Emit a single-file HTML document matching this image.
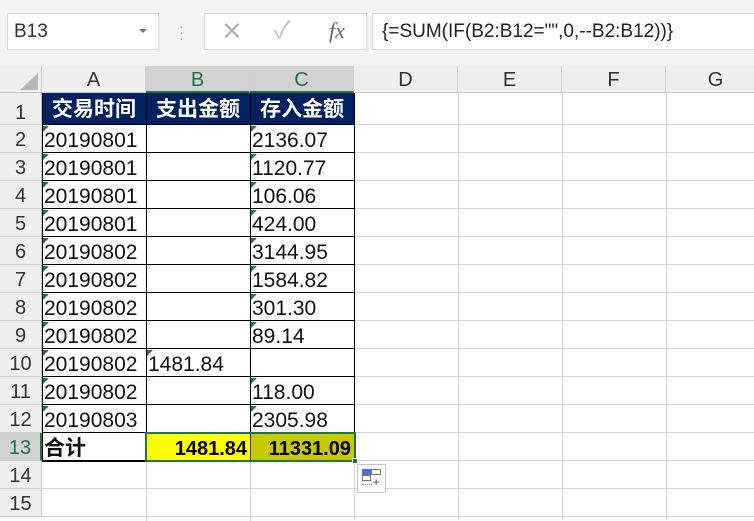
<!DOCTYPE html>
<html><head><meta charset="utf-8"><style>
*{margin:0;padding:0;box-sizing:border-box}
body{width:754px;height:520px;overflow:hidden;background:#fff;position:relative;font-family:"Liberation Sans","Noto Sans CJK SC",sans-serif}
.a{position:absolute}
.top{left:0;top:0;width:754px;height:66px;background:#f3f3f3}
.box{background:#fff;border:1px solid #dadada}
.ch{top:66px;height:27px;background:#efefef;border-right:1px solid #d0d0d0;border-bottom:1px solid #c8c8c8;text-align:center;font-size:20px;line-height:29px;color:#333}
.rh{left:0;width:42px;height:28px;background:#efefef;border-bottom:1px solid #d0d0d0;border-right:1px solid #c8c8c8;text-align:center;font-size:20px;line-height:31px;color:#333}
.vl{top:93px;width:1px;height:427px;background:#d4d4d4}
.hl{left:42px;width:712px;height:1px;background:#d4d4d4}
.c{height:28px;font-size:21px;line-height:32px;padding-left:2px;color:#111;white-space:nowrap}
.t{width:0;height:0;border-top:6px solid #1e7b34;border-right:6px solid transparent}
</style></head><body>
<div class="a top"></div>
<div class="a box" style="left:7px;top:13px;width:152px;height:37px"></div>
<div class="a" style="left:14px;top:13px;line-height:37px;font-size:19px;color:#333">B13</div>
<div class="a" style="left:139px;top:29px;width:0;height:0;border-left:4px solid transparent;border-right:4px solid transparent;border-top:4px solid #777"></div>
<div class="a" style="left:179px;top:23px;color:#aaa;font-size:14px;line-height:6px">·<br>·<br>·</div>
<div class="a box" style="left:204px;top:13px;width:163px;height:37px"></div>
<div class="a" style="left:221px;top:17px;font-size:26px;color:#b8b8b8;line-height:28px">✕</div>
<div class="a" style="left:274px;top:17px;font-size:24px;color:#c0c0c0;line-height:28px">✓</div>
<div class="a" style="left:329px;top:17px;font-size:22px;color:#666;font-style:italic;font-family:'Liberation Serif',serif;line-height:28px">fx</div>
<div class="a box" style="left:372px;top:13px;width:390px;height:37px"></div>
<div class="a" style="left:382px;top:13px;line-height:38px;font-size:19px;color:#222">{=SUM(IF(B2:B12="",0,--B2:B12))}</div>

<div class="a" style="left:0;top:66px;width:42px;height:27px;background:#efefef;border-right:1px solid #c8c8c8;border-bottom:1px solid #c8c8c8"></div>
<div class="a" style="left:20px;top:73px;width:0;height:0;border-left:18px solid transparent;border-bottom:17px solid #b7b7b7"></div>
<div class="a ch" style="left:42px;width:104px">A</div>
<div class="a ch" style="left:146px;width:104px;background:#d2d2d2;color:#217346;border-bottom:2px solid #217346">B</div>
<div class="a ch" style="left:250px;width:104px;background:#d2d2d2;color:#217346;border-bottom:2px solid #217346">C</div>
<div class="a ch" style="left:354px;width:104px">D</div>
<div class="a ch" style="left:458px;width:104px">E</div>
<div class="a ch" style="left:562px;width:104px">F</div>
<div class="a ch" style="left:666px;width:100px">G</div>

<div class="a rh" style="top:93px;height:32px;line-height:40px">1</div>
<div class="a rh" style="top:125px">2</div><div class="a rh" style="top:153px">3</div><div class="a rh" style="top:181px">4</div><div class="a rh" style="top:209px">5</div><div class="a rh" style="top:237px">6</div><div class="a rh" style="top:265px">7</div><div class="a rh" style="top:293px">8</div><div class="a rh" style="top:321px">9</div><div class="a rh" style="top:349px">10</div><div class="a rh" style="top:377px">11</div><div class="a rh" style="top:405px">12</div>
<div class="a rh" style="top:433px;background:#d2d2d2;color:#217346;border-right:2px solid #217346">13</div>
<div class="a rh" style="top:461px">14</div><div class="a rh" style="top:489px">15</div>

<div class="a vl" style="left:458px"></div><div class="a vl" style="left:562px"></div><div class="a vl" style="left:666px"></div>
<div class="a vl" style="left:146px;top:461px;height:60px"></div><div class="a vl" style="left:250px;top:461px;height:60px"></div><div class="a vl" style="left:354px;top:93px"></div>
<div class="a hl" style="top:124px"></div><div class="a hl" style="top:152px"></div><div class="a hl" style="top:180px"></div><div class="a hl" style="top:208px"></div><div class="a hl" style="top:236px"></div><div class="a hl" style="top:264px"></div><div class="a hl" style="top:292px"></div><div class="a hl" style="top:320px"></div><div class="a hl" style="top:348px"></div><div class="a hl" style="top:376px"></div><div class="a hl" style="top:404px"></div><div class="a hl" style="top:432px"></div><div class="a hl" style="top:460px"></div><div class="a hl" style="top:488px"></div><div class="a hl" style="top:516px"></div>

<div class="a" style="left:42px;top:93px;width:313px;height:32px;background:#002060"></div>
<div class="a" style="left:42px;top:93px;width:313px;height:369px;border:1px solid #000;border-top:none"></div>
<div class="a" style="left:146px;top:93px;width:1px;height:369px;background:#000"></div>
<div class="a" style="left:250px;top:93px;width:1px;height:369px;background:#000"></div>
<div class="a" style="left:42px;top:124px;width:313px;height:337px;background:repeating-linear-gradient(to bottom,#000 0,#000 1px,transparent 1px,transparent 28px)"></div>
<div class="a" style="left:42px;top:93px;width:104px;text-align:center;color:#fff;font-weight:bold;font-size:21px;line-height:34px">交易时间</div>
<div class="a" style="left:146px;top:93px;width:104px;text-align:center;color:#fff;font-weight:bold;font-size:21px;line-height:34px">支出金额</div>
<div class="a" style="left:250px;top:93px;width:104px;text-align:center;color:#fff;font-weight:bold;font-size:21px;line-height:34px">存入金额</div>

<div class="a c" style="left:42px;top:125px">20190801</div><div class="a c" style="left:250px;top:125px">2136.07</div>
<div class="a c" style="left:42px;top:153px">20190801</div><div class="a c" style="left:250px;top:153px">1120.77</div>
<div class="a c" style="left:42px;top:181px">20190801</div><div class="a c" style="left:250px;top:181px">106.06</div>
<div class="a c" style="left:42px;top:209px">20190801</div><div class="a c" style="left:250px;top:209px">424.00</div>
<div class="a c" style="left:42px;top:237px">20190802</div><div class="a c" style="left:250px;top:237px">3144.95</div>
<div class="a c" style="left:42px;top:265px">20190802</div><div class="a c" style="left:250px;top:265px">1584.82</div>
<div class="a c" style="left:42px;top:293px">20190802</div><div class="a c" style="left:250px;top:293px">301.30</div>
<div class="a c" style="left:42px;top:321px">20190802</div><div class="a c" style="left:250px;top:321px">89.14</div>
<div class="a c" style="left:42px;top:349px">20190802</div><div class="a c" style="left:146px;top:349px">1481.84</div>
<div class="a c" style="left:42px;top:377px">20190802</div><div class="a c" style="left:250px;top:377px">118.00</div>
<div class="a c" style="left:42px;top:405px">20190803</div><div class="a c" style="left:250px;top:405px">2305.98</div>

<div class="a t" style="left:43px;top:126px"></div><div class="a t" style="left:251px;top:126px"></div>
<div class="a t" style="left:43px;top:154px"></div><div class="a t" style="left:251px;top:154px"></div>
<div class="a t" style="left:43px;top:182px"></div><div class="a t" style="left:251px;top:182px"></div>
<div class="a t" style="left:43px;top:210px"></div><div class="a t" style="left:251px;top:210px"></div>
<div class="a t" style="left:43px;top:238px"></div><div class="a t" style="left:251px;top:238px"></div>
<div class="a t" style="left:43px;top:266px"></div><div class="a t" style="left:251px;top:266px"></div>
<div class="a t" style="left:43px;top:294px"></div><div class="a t" style="left:251px;top:294px"></div>
<div class="a t" style="left:43px;top:322px"></div><div class="a t" style="left:251px;top:322px"></div>
<div class="a t" style="left:43px;top:350px"></div><div class="a t" style="left:147px;top:350px"></div>
<div class="a t" style="left:43px;top:378px"></div><div class="a t" style="left:251px;top:378px"></div>
<div class="a t" style="left:43px;top:406px"></div><div class="a t" style="left:251px;top:406px"></div>

<div class="a c" style="left:42px;top:433px;font-weight:bold">合计</div>
<div class="a" style="left:147px;top:433px;width:103px;height:28px;background:#ffff00"></div>
<div class="a" style="left:251px;top:433px;width:103px;height:28px;background:#c9c900"></div>
<div class="a" style="left:250px;top:434px;width:1px;height:26px;background:#333"></div>
<div class="a" style="left:146px;top:433px;width:104px;text-align:right;padding-right:3px;font-weight:bold;font-size:20px;line-height:32px">1481.84</div>
<div class="a" style="left:250px;top:433px;width:104px;text-align:right;padding-right:3px;font-weight:bold;font-size:20px;line-height:32px">11331.09</div>
<div class="a" style="left:145px;top:432px;width:211px;height:30px;border:2px solid #217346"></div>
<div class="a" style="left:352px;top:458px;width:6px;height:6px;background:#217346;border:1px solid #fff"></div>

<div class="a" style="left:357px;top:464px;width:29px;height:29px;border:1px solid #c6c6c6;background:#fff"></div>
<div class="a" style="left:362px;top:469px;width:9px;height:6px;background:#4472e0"></div>
<div class="a" style="left:371px;top:469px;width:10px;height:6px;border:1px solid #777"></div>
<div class="a" style="left:362px;top:475px;width:9px;height:6px;border:1px solid #777"></div>
<div class="a" style="left:362px;top:484px;width:10px;height:0;border-top:1px dotted #888"></div>
<div class="a" style="left:373px;top:477px;font-size:11px;color:#777;font-weight:bold">+</div>
</body></html>
